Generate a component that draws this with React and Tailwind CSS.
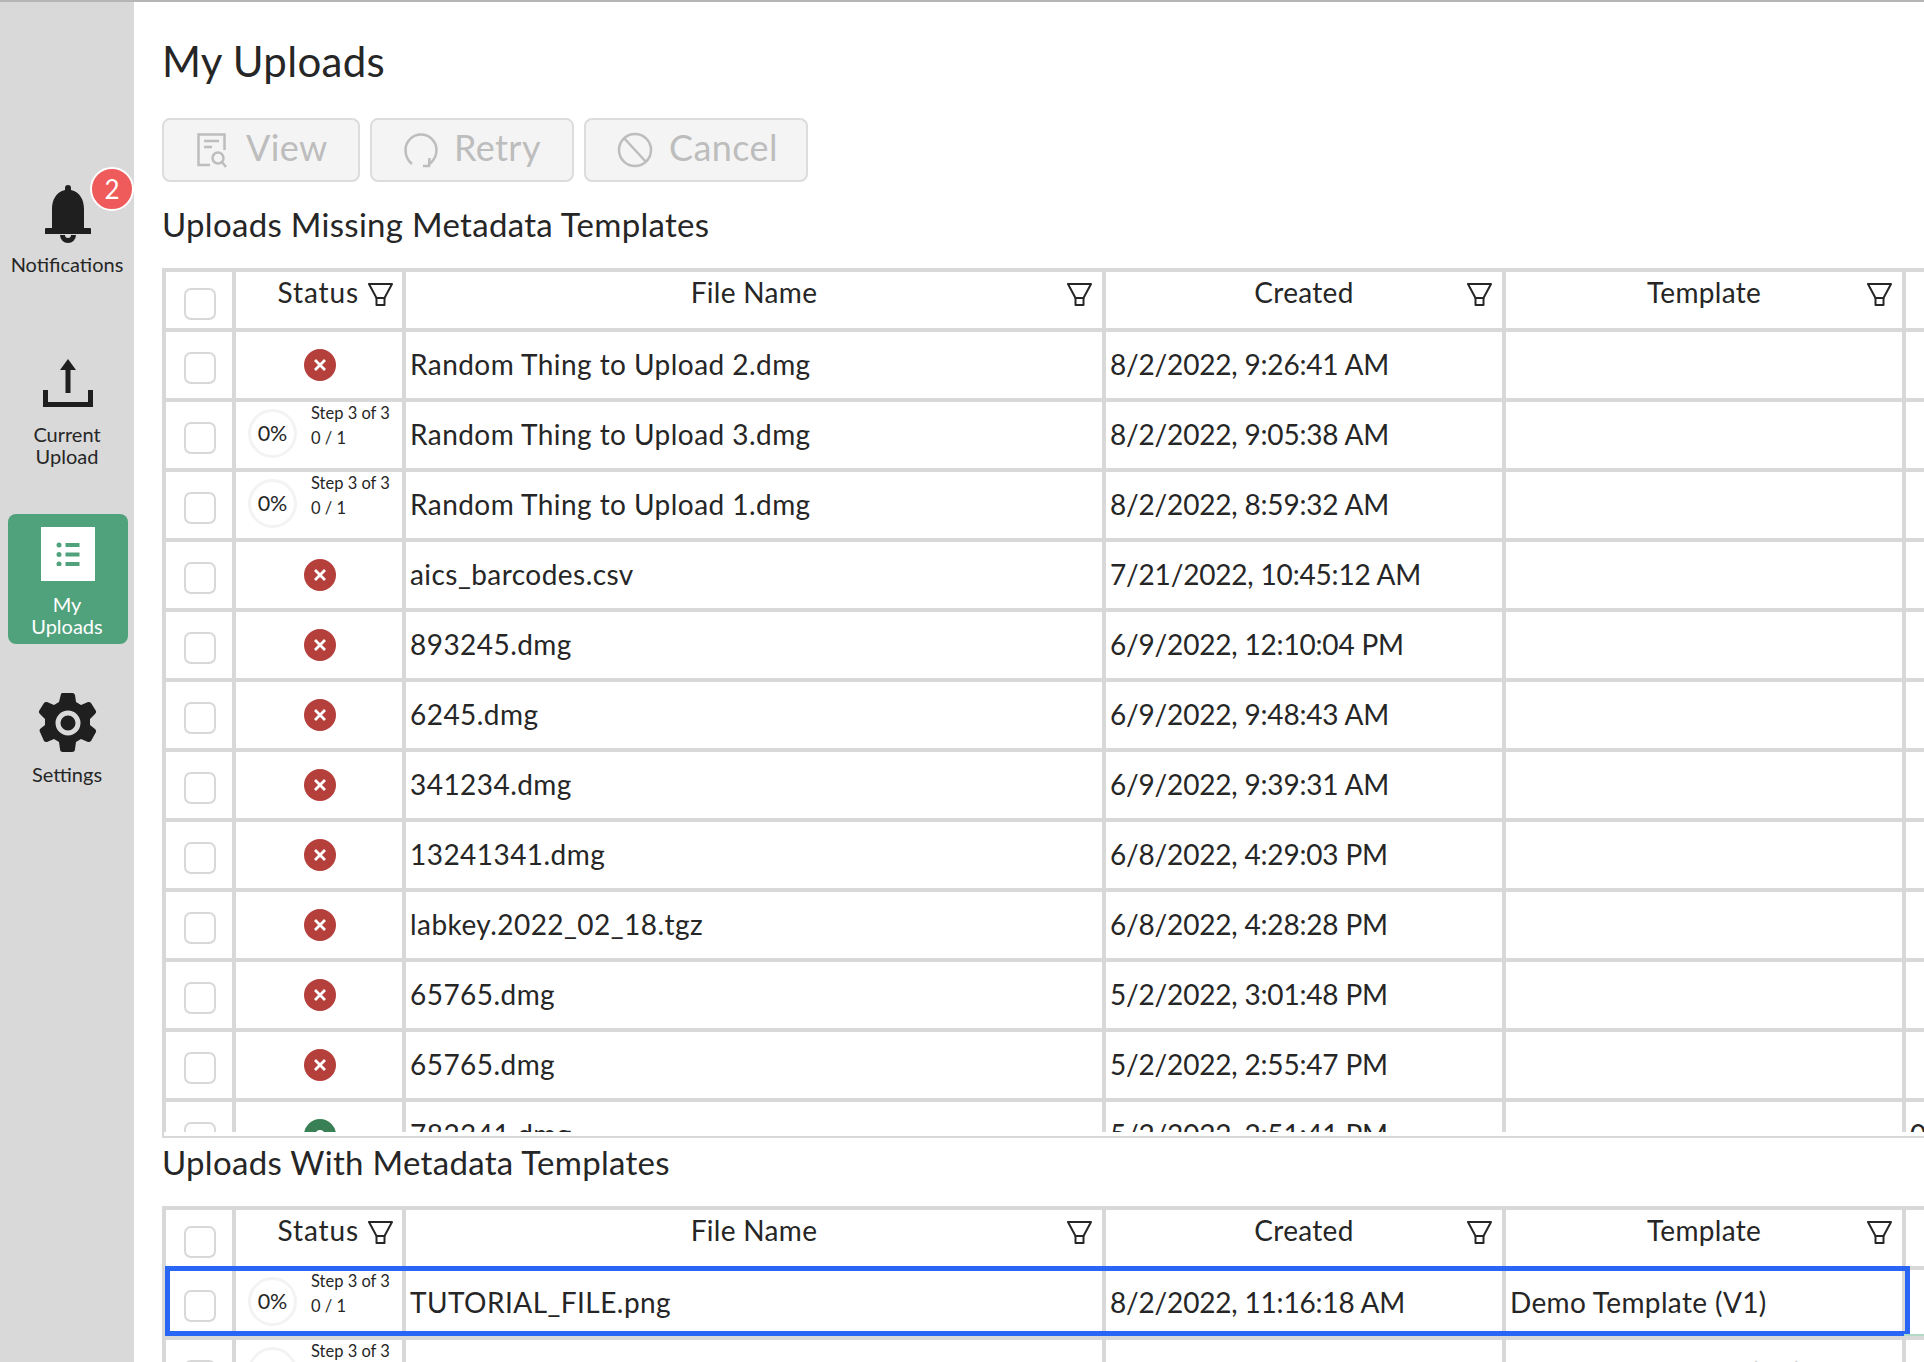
import React from 'react';

const font = "font-['Lato','Noto_Sans',sans-serif]";

const missingRows = [
  { status: 'error', name: 'Random Thing to Upload 2.dmg', created: '8/2/2022, 9:26:41 AM' },
  { status: 'step', name: 'Random Thing to Upload 3.dmg', created: '8/2/2022, 9:05:38 AM' },
  { status: 'step', name: 'Random Thing to Upload 1.dmg', created: '8/2/2022, 8:59:32 AM' },
  { status: 'error', name: 'aics_barcodes.csv', created: '7/21/2022, 10:45:12 AM' },
  { status: 'error', name: '893245.dmg', created: '6/9/2022, 12:10:04 PM' },
  { status: 'error', name: '6245.dmg', created: '6/9/2022, 9:48:43 AM' },
  { status: 'error', name: '341234.dmg', created: '6/9/2022, 9:39:31 AM' },
  { status: 'error', name: '13241341.dmg', created: '6/8/2022, 4:29:03 PM' },
  { status: 'error', name: 'labkey.2022_02_18.tgz', created: '6/8/2022, 4:28:28 PM' },
  { status: 'error', name: '65765.dmg', created: '5/2/2022, 3:01:48 PM' },
  { status: 'error', name: '65765.dmg', created: '5/2/2022, 2:55:47 PM' },
  { status: 'done', name: '782341.dmg', created: '5/2/2022, 2:51:41 PM', last: '0' },
];

const BellIcon = () => (
  <svg width="46" height="60" viewBox="0 0 46 60" fill="#1f1f1f">
    <path d="M20 4a3 3 0 0 1 6 0v2c9 2 13 10 13 19v19h6a1 1 0 0 1 1 1v5H0v-5a1 1 0 0 1 1-1h6V25C7 16 11 8 20 6z" />
    <path d="M15 51h16a8 8 0 0 1-16 0z" />
    <path d="M20 51h6a3 3 0 0 1-6 0z" fill="#d9d9d9" />
  </svg>
);

const UploadIcon = () => (
  <svg width="50" height="48" viewBox="0 0 50 48" fill="#1f1f1f">
    <path d="M25 0l8 11h-5.500v23h-5V11H17z" />
    <path d="M0 31h5v12h40V31h5v17H0z" />
  </svg>
);

const ListIcon = () => (
  <div className="flex h-[54px] w-[54px] items-center justify-center bg-white">
    <svg width="24" height="24" viewBox="0 0 24 24" fill="#4fa27c">
      <circle cx="3" cy="3" r="2.500" />
      <circle cx="3" cy="12.500" r="2.500" />
      <circle cx="3" cy="22" r="2.500" />
      <rect x="9.500" y="1" width="14" height="4" />
      <rect x="9.500" y="10.500" width="14" height="4" />
      <rect x="9.500" y="20" width="14" height="4" />
    </svg>
  </div>
);

const GearIcon = () => (
  <svg width="58" height="60" viewBox="0 0 58 60">
    <path
      fill="#1f1f1f"
      d="M22 1a3 3 0 0 1 3-1h8a3 3 0 0 1 3 2l1 7 5 3 7-3a3 3 0 0 1 3 1l5 8a3 3 0 0 1-1 3l-5 5v6l5 4a3 3 0 0 1 1 3l-5 9a3 3 0 0 1-3 1l-7-3-5 3-1 7a3 3 0 0 1-3 3h-9a3 3 0 0 1-3-3l-1-7-5-3-7 3a3 3 0 0 1-3-1l-4-9a3 3 0 0 1 0-3l5-4v-6l-5-5a3 3 0 0 1-1-3l5-8a3 3 0 0 1 3-1l7 3 5-3z"
    />
    <circle cx="29" cy="30" r="10" fill="#1f1f1f" stroke="#d9d9d9" strokeWidth="5" />
  </svg>
);

const FilterIcon = () => (
  <svg width="25" height="23" viewBox="0 0 25 23" fill="none" stroke="#262626" strokeWidth="2" strokeLinejoin="round">
    <path d="M1 1h23l-7.500 14h-8z" />
    <path d="M8.500 15h8v7h-8z" />
  </svg>
);

const ViewIcon = () => (
  <svg width="30" height="35" viewBox="0 0 30 35" fill="none" stroke="#bdbdbd" strokeWidth="2.500">
    <path d="M13 32H1.500V1.500h26V17" />
    <path d="M7 8h15M7 14h8" />
    <circle cx="21" cy="25" r="5.500" />
    <path d="M25 29l4 5" />
  </svg>
);

const RetryIcon = () => (
  <svg width="34" height="36" viewBox="0 0 34 36" fill="none" stroke="#bdbdbd" strokeWidth="2.500">
    <path d="M8 32C3 28 1.500 24 1.500 18a15.500 15.500 0 0 1 31 0c0 6-2 10-7 14" />
    <path d="M25.500 26l-.5 8h-6" />
  </svg>
);

const CancelIcon = () => (
  <svg width="36" height="36" viewBox="0 0 36 36" fill="none" stroke="#bdbdbd" strokeWidth="2.500">
    <circle cx="18" cy="18" r="16" />
    <path d="M7 6l22 24" />
  </svg>
);

const NavItem = ({ icon, label, active, className, labelClass }) => (
  <div
    className={`mx-[8px] flex w-[120px] flex-col items-center rounded-lg ${
      active ? 'bg-[#4fa27c] text-white' : 'text-[#262626]'
    } ${className}`}
  >
    {icon}
    <div className={`pr-[2px] text-center text-[20px] leading-[22px] ${labelClass}`}>{label}</div>
  </div>
);

const ActionButton = ({ icon, label, className }) => (
  <button
    className={`flex h-[64px] items-center rounded-lg border-2 border-[#dcdcdc] bg-[#f4f4f4] text-[36px] text-[#bdbdbd] ${className}`}
  >
    {icon}
    <span className="-mt-[6px] tracking-[0.4px]">{label}</span>
  </button>
);

const ErrorStatus = () => (
  <div className="ml-[2px] flex h-[32px] w-[32px] items-center justify-center rounded-full bg-[#b53f3a]">
    <svg width="16" height="16" viewBox="0 0 16 16" stroke="#fff" strokeWidth="2.800">
      <path d="M3 3l10 10M13 3L3 13" />
    </svg>
  </div>
);

const DoneStatus = () => (
  <div className="ml-[2px] flex h-[32px] w-[32px] items-center justify-center rounded-full bg-[#3a8057]">
    <div className="h-[10px] w-[10px] rounded-full border-2 border-white" />
  </div>
);

const StepStatus = () => (
  <div className="flex w-full items-center pb-[4px] pl-[12px]">
    <div className="flex h-[49px] w-[49px] shrink-0 items-center justify-center rounded-full border-[3px] border-[#f3f3f3] text-[21.500px] text-[#262626]">
      0%
    </div>
    <div className="-mt-[16px] ml-[14px] text-[16.500px] text-[#262626]">
      <div className="leading-[20px] whitespace-nowrap">Step 3 of 3</div>
      <div className="mt-[5px] leading-[20px]">0 / 1</div>
    </div>
  </div>
);

const Checkbox = ({ className }) => (
  <div className={`h-[32px] w-[32px] rounded-[7px] border-2 border-[#d8d8d8] bg-white ${className}`} />
);

const HeaderRow = () => {
  const cell = 'relative border-l-4 border-[#d8d8d8] pt-[3px] text-center tracking-[0.3px]';
  return (
    <div className="grid h-[60px] grid-cols-[68px_170px_700px_400px_400px_100px] border-t-4 border-[#d8d8d8] text-[28px] leading-[34px] text-[#262626]">
      <div className="flex justify-center border-l-2 border-[#d8d8d8] pt-[16px] pl-[2px]">
        <Checkbox />
      </div>
      <div className={`${cell} pr-[43px] text-right tracking-[0.9px]`}>
        Status
        <span className="absolute top-[11px] left-[132px]"><FilterIcon /></span>
      </div>
      <div className={cell}>
        File Name
        <span className="absolute top-[11px] right-[10px]"><FilterIcon /></span>
      </div>
      <div className={cell}>
        Created
        <span className="absolute top-[11px] right-[10px]"><FilterIcon /></span>
      </div>
      <div className={cell}>
        Template
        <span className="absolute top-[11px] right-[10px]"><FilterIcon /></span>
      </div>
      <div className="border-l-4 border-[#d8d8d8]" />
    </div>
  );
};

const DataRow = ({ status, name, created, template, last, faded, highlight }) => {
  const text = faded ? 'text-[#d0d0d0]' : 'text-[#262626]';
  const cell = 'flex items-center border-l-4 border-[#d8d8d8]';
  return (
    <div
      className={`relative grid h-[70px] grid-cols-[68px_170px_700px_400px_400px_100px] border-t-4 border-[#d8d8d8] text-[28px] ${text}`}
    >
      <div className="flex items-center justify-center border-l-2 border-[#d8d8d8] pt-[5px] pl-[2px]">
        <Checkbox />
      </div>
      <div className={`${cell} justify-center`}>
        {status === 'error' && <ErrorStatus />}
        {status === 'done' && <DoneStatus />}
        {status === 'step' && <StepStatus />}
      </div>
      <div className={`${cell} pb-[2px] pl-[4px] tracking-[0.45px] whitespace-nowrap`}>{name}</div>
      <div className={`${cell} pb-[2px] pl-[4px] tracking-[-0.18px] whitespace-nowrap`}>{created}</div>
      <div className={`${cell} pb-[2px] pl-[4px] tracking-[0.35px] whitespace-nowrap`}>{template}</div>
      <div className={`${cell} pb-[2px] pl-[4px]`}>{last}</div>
      {highlight && (
        <div className="absolute -top-[4px] left-[1px] h-[70px] w-[1745px] border-[5px] border-[#2a66f6]" />
      )}
    </div>
  );
};

export default function App() {
  return (
    <div className={`flex h-[1362px] w-[1924px] overflow-hidden border-t-2 border-[#b5b5b5] bg-white ${font}`}>
      <aside className="h-full w-[134px] shrink-0 bg-[#d9d9d9]">
        <NavItem
          className="relative mt-[182px]"
          labelClass="mt-[9px]"
          icon={<BellIcon />}
          label="Notifications"
        />
        <div className="absolute top-[167px] left-[90px] flex h-[44px] w-[44px] items-center justify-center rounded-full border-2 border-white bg-[#ef5b5a] text-[26px] text-white">
          2
        </div>
        <NavItem
          className="mt-[84px]"
          labelClass="mt-[16px]"
          icon={<UploadIcon />}
          label={<>Current<br />Upload</>}
        />
        <NavItem
          className="mt-[47px] h-[130px] pt-[13px]"
          labelClass="mt-[12px]"
          active
          icon={<ListIcon />}
          label={<>My<br />Uploads</>}
        />
        <NavItem className="mt-[49px]" labelClass="mt-[10px]" icon={<GearIcon />} label="Settings" />
      </aside>

      <main className="min-w-0 flex-1 pl-[28px] text-[#262626]">
        <h1 className="pt-[33px] pb-[1px] text-[42px] leading-[52px] tracking-[0.3px]">My Uploads</h1>
        <div className="mt-[30px] flex gap-[10px]">
          <ActionButton className="w-[198px] gap-[19px] pl-[33px]" icon={<ViewIcon />} label="View" />
          <ActionButton className="w-[204px] gap-[16px] pl-[32px]" icon={<RetryIcon />} label="Retry" />
          <ActionButton className="w-[224px] gap-[16px] pl-[31px]" icon={<CancelIcon />} label="Cancel" />
        </div>
        <h2 className="mt-[21px] pb-[1px] text-[33px] leading-[42px] tracking-[0.3px]">Uploads Missing Metadata Templates</h2>

        <div className="mt-[22px] h-[870px] overflow-hidden border-b-2 border-l-2 border-[#d8d8d8] pb-[4px]">
          <div className="h-full overflow-hidden">
            <HeaderRow />
            {missingRows.map((row, i) => (
              <DataRow key={i} {...row} />
            ))}
          </div>
        </div>

        <h2 className="mt-[3px] text-[33px] leading-[42px] tracking-[0.3px]">Uploads With Metadata Templates</h2>

        <div className="mt-[23px] border-l-2 border-[#d8d8d8]">
          <HeaderRow />
          <DataRow
            highlight
            status="step"
            name="TUTORIAL_FILE.png"
            created="8/2/2022, 11:16:18 AM"
            template="Demo Template (V1)"
          />
          <div className="relative">
            <div className="absolute top-[-2px] left-[1740px] h-[40px] w-[40px] border-t-2 border-l-2 border-[#b3d9c7]" />
            <DataRow
              faded
              status="step"
              name="Test File To Test Template.png"
              created="8/1/2022, 4:26:47 PM"
              template="bulk Test Template (V1)"
            />
          </div>
        </div>
      </main>
    </div>
  );
}
